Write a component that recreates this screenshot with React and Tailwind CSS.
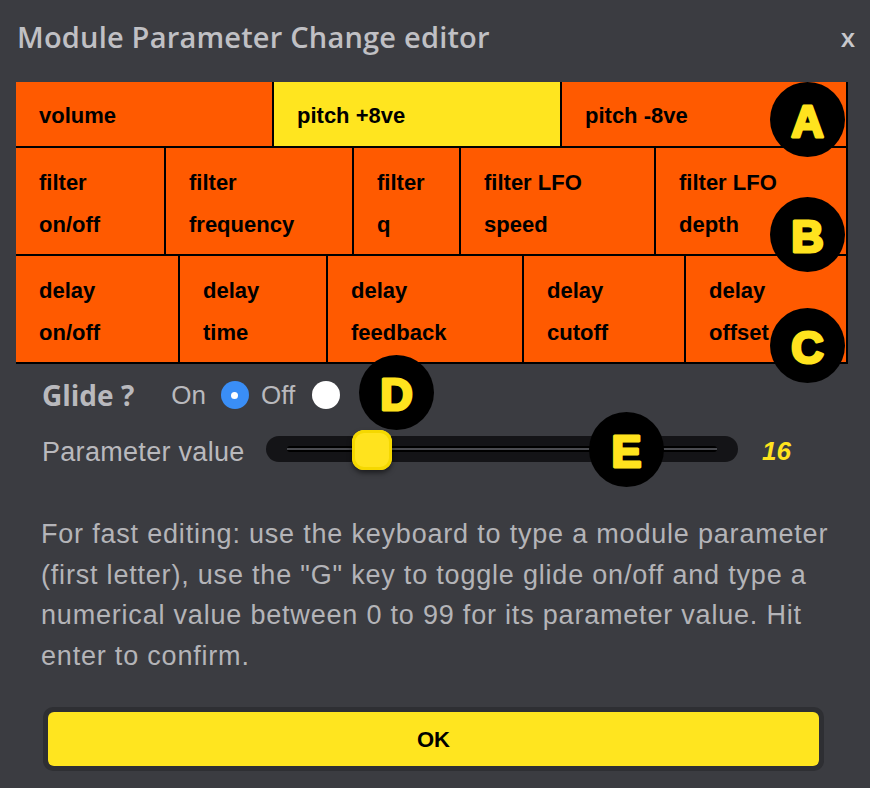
import React from 'react';

const rows = [
  {
    h: 'h-[66px]',
    cells: [
      { w: 'w-[258px]', lines: ['volume'] },
      { w: 'w-[288px]', lines: ['pitch +8ve'], active: true },
      { w: 'w-[286px]', lines: ['pitch -8ve'] },
    ],
  },
  {
    h: 'h-[108px]',
    cells: [
      { w: 'w-[150px]', lines: ['filter', 'on/off'] },
      { w: 'w-[188px]', lines: ['filter', 'frequency'] },
      { w: 'w-[107px]', lines: ['filter', 'q'] },
      { w: 'w-[195px]', lines: ['filter LFO', 'speed'] },
      { w: 'w-[192px]', lines: ['filter LFO', 'depth'] },
    ],
  },
  {
    h: 'h-[108px]',
    cells: [
      { w: 'w-[164px]', lines: ['delay', 'on/off'] },
      { w: 'w-[148px]', lines: ['delay', 'time'] },
      { w: 'w-[196px]', lines: ['delay', 'feedback'] },
      { w: 'w-[162px]', lines: ['delay', 'cutoff'] },
      { w: 'w-[162px]', lines: ['delay', 'offset'] },
    ],
  },
];

const markers = [
  { label: 'A', pos: 'left-[770px] top-[82px]' },
  { label: 'B', pos: 'left-[770px] top-[197px]' },
  { label: 'C', pos: 'left-[770px] top-[308px]' },
  { label: 'D', pos: 'left-[359px] top-[355px]' },
  { label: 'E', pos: 'left-[589px] top-[412px]' },
];

function Cell({ cell }) {
  const single = cell.lines.length === 1;
  return (
    <div
      className={`${cell.w} h-full shrink-0 border-r-2 border-black pl-[23px] text-[22px] font-bold text-black ${
        cell.active ? 'bg-[#ffe51f]' : 'bg-[#ff5a00]'
      } ${single ? 'flex items-center pt-[2px]' : 'pt-[14px] leading-[42px]'}`}
    >
      {single ? cell.lines[0] : cell.lines.map((l) => <div key={l}>{l}</div>)}
    </div>
  );
}

function Marker({ label, pos }) {
  return (
    <svg className={`absolute ${pos}`} width="75" height="75" viewBox="0 0 75 75">
      <circle cx="37.5" cy="37.5" r="37.5" fill="#000" />
      <text
        x="37.5"
        y="55"
        textAnchor="middle"
        fontFamily="Liberation Sans, Arial, sans-serif"
        fontWeight="700"
        fontSize="45"
        fill="#ffe31e"
        stroke="#ffe31e"
        strokeWidth="3"
        strokeLinejoin="round"
      >
        {label}
      </text>
    </svg>
  );
}

export default function App() {
  return (
    <div className="relative h-[788px] w-[870px] overflow-hidden bg-[#3b3c41] font-['Liberation_Sans',Arial,sans-serif]">
      <div className="flex h-[82px] items-center justify-between pb-[8px] pl-[17px] pr-[15px]">
        <h1 className="font-['Open_Sans',sans-serif] text-[29px] font-semibold tracking-[0.2px] text-[#c0c0c4]">
          Module Parameter Change editor
        </h1>
        <span className="font-['Open_Sans',sans-serif] text-[26px] font-semibold text-[#c8c8cc]">x</span>
      </div>

      <div className="ml-[16px] w-[832px]">
        {rows.map((row, i) => (
          <div key={i} className={`flex ${row.h} border-b-2 border-black`}>
            {row.cells.map((cell) => (
              <Cell key={cell.lines.join('-')} cell={cell} />
            ))}
          </div>
        ))}
      </div>

      <div className="mt-[14px] flex h-[34px] items-center pl-[42px] text-[26px] text-[#b9b9bd]">
        <span className="font-['Open_Sans',sans-serif] text-[28px] font-bold">Glide ?</span>
        <span className="ml-[37px]">On</span>
        <span className="ml-[15px] flex h-[28px] w-[28px] items-center justify-center rounded-full bg-[#3a8ef6]">
          <span className="h-[7px] w-[7px] rounded-full bg-white" />
        </span>
        <span className="ml-[12px]">Off</span>
        <span className="ml-[17px] h-[28px] w-[28px] rounded-full bg-white" />
      </div>

      <div className="mt-[21px] flex h-[32px] items-center pl-[42px] text-[#b9b9bd]">
        <span className="w-[224px] pt-[6px] text-[27px] tracking-[0.3px]">Parameter value</span>
        <div className="relative h-[26px] w-[472px] rounded-full bg-[#141417]">
          <div className="absolute left-[21px] right-[21px] top-[10px] flex h-[6px] items-center rounded-full bg-black">
            <div className="h-[2px] w-full bg-[#4a4b50]" />
          </div>
          <div className="absolute left-[86px] top-[-6px] h-[40px] w-[40px] rounded-[12px] bg-[#ffe31e] shadow-[0_3px_5px_rgba(0,0,0,0.5),inset_0_0_0_3px_#f5d800]" />
        </div>
        <span className="ml-[24px] pt-[4px] text-[26px] font-bold italic text-[#ffe31e]">16</span>
      </div>

      <div className="mt-[49px] pl-[41px] text-[27px] leading-[40.5px] tracking-[0.8px] text-[#b4b4b8]">
        <div className="whitespace-nowrap">For fast editing: use the keyboard to type a module parameter</div>
        <div className="whitespace-nowrap">(first letter), use the "G" key to toggle glide on/off and type a</div>
        <div className="whitespace-nowrap">numerical value between 0 to 99 for its parameter value. Hit</div>
        <div className="whitespace-nowrap">enter to confirm.</div>
      </div>

      <div className="ml-[43px] mt-[31px] w-[781px] rounded-[10px] bg-[#2e2f33] p-[5px]">
        <button className="flex h-[54px] w-full items-center justify-center rounded-[6px] bg-[#ffe51f] text-[22px] font-bold text-black">
          OK
        </button>
      </div>

      {markers.map((m) => (
        <Marker key={m.label} label={m.label} pos={m.pos} />
      ))}
    </div>
  );
}
